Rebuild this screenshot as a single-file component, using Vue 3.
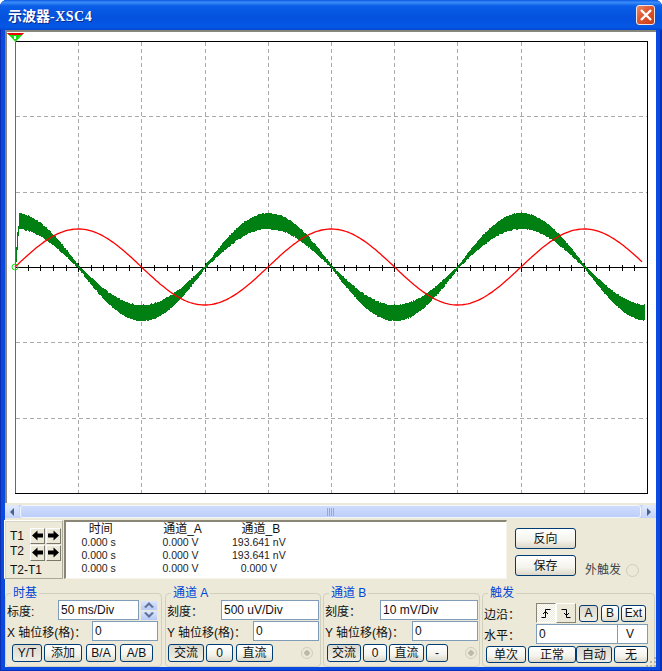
<template>
  <div class="window">
    <!-- 标题栏 -->
    <div class="titlebar">
      <span class="title">示波器<span class="title-latin">-XSC4</span></span>
      <div class="close">
        <svg width="14" height="14" viewBox="0 0 14 14">
          <path d="M2 2 L12 12 M12 2 L2 12" stroke="#fff" stroke-width="2.4" fill="none" />
        </svg>
      </div>
    </div>

    <div class="client">
      <!-- 波形区 -->
      <div class="plot-panel">
        <svg class="plot" width="651" height="473" viewBox="5 30 651 473">
          <rect x="15.5" y="41.5" width="632" height="452" fill="#fff" stroke="#000" />
          <path v-for="x in gridX" :key="'x' + x" :d="`M${x} 42 V493`" class="grid" />
          <path v-for="y in gridY" :key="'y' + y" :d="`M16 ${y} H647`" class="grid" />
          <path d="M15 267.5 H647" stroke="#000" fill="none" shape-rendering="crispEdges" />
          <path :d="ticks" stroke="#000" fill="none" shape-rendering="crispEdges" />
          <path :d="greenPath" stroke="#007f12" stroke-width="1" fill="none" shape-rendering="crispEdges" />
          <path :d="redPath" stroke="#f00" stroke-width="1.3" fill="none" />
          <path d="M15.5 36 V493" stroke="#f0f" fill="none" shape-rendering="crispEdges" />
          <circle cx="15" cy="267" r="3" fill="none" stroke="#18e018" />
          <path d="M7 33 H24 L15.5 42 Z" fill="#10e010" />
          <path d="M7 33 H24 L22 35 H9 Z" fill="#f00000" />
          <path d="M14 36 H16 V39 H14 Z" fill="#fff" />
        </svg>
      </div>

      <!-- 滚动条 -->
      <div class="scrollbar">
        <div class="sb-btn">
          <svg width="8" height="10" viewBox="0 0 8 10"><path d="M6 1 L2 5 L6 9 Z" fill="#4d6185" /></svg>
        </div>
        <div class="sb-thumb">
          <svg width="9" height="8" viewBox="0 0 9 8">
            <path d="M1.5 0 V8 M3.5 0 V8 M5.5 0 V8 M7.5 0 V8" stroke="#8fa9e6" fill="none" />
          </svg>
        </div>
        <div class="sb-btn">
          <svg width="8" height="10" viewBox="0 0 8 10"><path d="M2 1 L6 5 L2 9 Z" fill="#4d6185" /></svg>
        </div>
      </div>

      <!-- 游标读数 -->
      <div class="measure">
        <div class="cursors">
          <span class="t-label">T1</span>
          <div class="arrow">
            <svg width="11" height="11" viewBox="0 0 11 11"><path d="M0 5.5 L5.5 0.5 V3.5 H11 V7.5 H5.5 V10.5 Z" /></svg>
          </div>
          <div class="arrow">
            <svg width="11" height="11" viewBox="0 0 11 11"><path d="M11 5.5 L5.5 0.5 V3.5 H0 V7.5 H5.5 V10.5 Z" /></svg>
          </div>
          <span class="t-label t2">T2</span>
          <div class="arrow">
            <svg width="11" height="11" viewBox="0 0 11 11"><path d="M0 5.5 L5.5 0.5 V3.5 H11 V7.5 H5.5 V10.5 Z" /></svg>
          </div>
          <div class="arrow">
            <svg width="11" height="11" viewBox="0 0 11 11"><path d="M11 5.5 L5.5 0.5 V3.5 H0 V7.5 H5.5 V10.5 Z" /></svg>
          </div>
          <span class="t-diff">T2-T1</span>
        </div>

        <div class="readout">
          <table>
            <thead>
              <tr><th class="c1">时间</th><th class="c2">通道_A</th><th class="c3">通道_B</th></tr>
            </thead>
            <tbody>
              <tr v-for="(row, i) in readings" :key="i">
                <td v-for="(v, j) in row" :key="j">{{ v }}</td>
              </tr>
            </tbody>
          </table>
        </div>

        <div class="side">
          <button class="btn side-btn">反向</button>
          <div class="save-row">
            <button class="btn side-btn">保存</button>
            <span class="ext-label">外触发</span>
            <span class="radio"></span>
          </div>
        </div>
      </div>

      <!-- 控制区 -->
      <div class="groups">
        <fieldset class="group g-time">
          <legend>时基</legend>
          <div class="row">
            <label>标度:</label>
            <input class="field w81" value="50 ms/Div" readonly />
            <div class="spin">
              <div class="spin-btn"><svg width="10" height="6" viewBox="0 0 10 6"><path d="M5 0 L10 5 L8 6 L5 3 L2 6 L0 5 Z" fill="#5f7398" /></svg></div>
              <div class="spin-btn"><svg width="10" height="6" viewBox="0 0 10 6"><path d="M5 6 L10 1 L8 0 L5 3 L2 0 L0 1 Z" fill="#5f7398" /></svg></div>
            </div>
          </div>
          <div class="row">
            <label>X 轴位移(格)：</label>
            <input class="field w66 out1" value="0" readonly />
          </div>
          <div class="buttons" style="margin-left: 5px">
            <button class="btn on" style="width: 30px">Y/T</button>
            <button class="btn" style="width: 38px; margin-left: 2px">添加</button>
            <button class="btn" style="width: 30px; margin-left: 4px">B/A</button>
            <button class="btn" style="width: 33px; margin-left: 4px">A/B</button>
          </div>
        </fieldset>

        <fieldset class="group g-a">
          <legend>通道 A</legend>
          <div class="row">
            <label>刻度：</label>
            <input class="field w98" value="500 uV/Div" readonly />
          </div>
          <div class="row">
            <label>Y 轴位移(格)：</label>
            <input class="field w66" value="0" readonly />
          </div>
          <div class="buttons" style="margin-left: 1px">
            <button class="btn on" style="width: 36px">交流</button>
            <button class="btn" style="width: 27px; margin-left: 2px">0</button>
            <button class="btn" style="width: 37px; margin-left: 3px">直流</button>
            <span class="radio dot" style="margin-left: 28px"></span>
          </div>
        </fieldset>

        <fieldset class="group g-b">
          <legend>通道 B</legend>
          <div class="row">
            <label>刻度：</label>
            <input class="field w98" value="10 mV/Div" readonly />
          </div>
          <div class="row">
            <label>Y 轴位移(格)：</label>
            <input class="field w66" value="0" readonly />
          </div>
          <div class="buttons" style="margin-left: 2px">
            <button class="btn on" style="width: 34px">交流</button>
            <button class="btn" style="width: 24px; margin-left: 2px">0</button>
            <button class="btn" style="width: 35px; margin-left: 2px">直流</button>
            <button class="btn" style="width: 22px; margin-left: 2px">-</button>
            <span class="radio dot" style="margin-left: 17px"></span>
          </div>
        </fieldset>

        <fieldset class="group g-trig">
          <legend>触发</legend>
          <div class="row trig-row1">
            <label class="trig-label">边沿：</label>
            <div class="edge pressed">
              <svg width="12" height="12" viewBox="0 0 12 12"><path d="M1.5 10.5 H5.5 V2.5 H10.5 M3 7 L5.5 4.5 L8 7" stroke="#000" fill="none" /></svg>
            </div>
            <div class="edge">
              <svg width="12" height="12" viewBox="0 0 12 12"><path d="M1.5 2.5 H6.5 V10.5 H10.5 M4 6 L6.5 8.5 L9 6" stroke="#000" fill="none" /></svg>
            </div>
            <button class="btn on small" style="width: 19px; margin-left: 3px">A</button>
            <button class="btn small" style="width: 18px; margin-left: 3px">B</button>
            <button class="btn small" style="width: 25px; margin-left: 2px">Ext</button>
          </div>
          <div class="row trig-row2">
            <label class="trig-label">水平：</label>
            <input class="field w82" value="0" readonly />
            <input class="field unit" value="V" readonly />
          </div>
          <div class="buttons" style="margin-left: 2px; margin-top: 2px">
            <button class="btn small" style="width: 40px">单次</button>
            <button class="btn small" style="width: 48px; margin-left: 2px">正常</button>
            <button class="btn on small" style="width: 36px">自动</button>
            <button class="btn small" style="width: 34px; margin-left: 2px">无</button>
          </div>
        </fieldset>
      </div>

      <!-- 右下角拖动点 -->
      <svg class="grip" width="12" height="12" viewBox="0 0 12 12">
        <path d="M9 1 h2 v2 h-2 Z M5 5 h2 v2 h-2 Z M9 5 h2 v2 h-2 Z M1 9 h2 v2 h-2 Z M5 9 h2 v2 h-2 Z M9 9 h2 v2 h-2 Z" fill="#b8b4a0" />
      </svg>
    </div>
  </div>
</template>

<script setup>
import { computed } from 'vue'

const readings = [
  ['0.000 s', '0.000 V', '193.641 nV'],
  ['0.000 s', '0.000 V', '193.641 nV'],
  ['0.000 s', '0.000 V', '0.000 V']
]

// 网格：10 格 × 6 格
const gridX = Array.from({ length: 9 }, (_, i) => Math.round(15 + 63.2 * (i + 1)) + 0.5)
const gridY = Array.from({ length: 5 }, (_, i) => Math.round(41 + 75.33 * (i + 1)) + 0.5)

const ticks = computed(() => {
  let d = ''
  for (let i = 1; i < 50; i++) {
    const x = Math.round(15 + 12.64 * i) + 0.5
    const h = i % 5 === 0 ? 4 : 2
    d += `M${x} ${265 - (h - 2)} V${271 + (h === 4 ? 1 : 0)} `
  }
  return d
})

const PERIOD = 253

const redPath = computed(() => {
  let d = 'M15 267'
  for (let x = 16; x <= 643; x += 2) {
    const y = 267 - 38 * Math.sin((2 * Math.PI * (x - 15)) / PERIOD)
    d += ` L${x} ${y.toFixed(1)}`
  }
  return d
})

// 伪随机毛刺，保证每次一样
const noise = (x, k) => {
  const s = Math.sin(x * 12.9898 + k * 78.233) * 43758.5453
  return s - Math.floor(s)
}

const greenPath = computed(() => {
  let d = 'M15.5 267 V262 M16.5 262 V247 M17.5 250 V232 M18.5 236 V226'
  for (let x = 19; x <= 644; x++) {
    const c = Math.cos((2 * Math.PI * (x - 15)) / PERIOD)
    const mid = 267 - 46 * c
    const half = 1 + 6.5 * Math.abs(c)
    const top = Math.round(mid - half - noise(x, 1) * 1.1)
    const bottom = Math.round(mid + half + noise(x, 2) * 1.1)
    d += ` M${x + 0.5} ${top} V${bottom}`
  }
  return d
})
</script>

<style scoped>
.window {
  width: 662px;
  height: 671px;
  box-sizing: border-box;
  padding: 0 6px 4px 5px;
  background: #0a4ae0;
  box-shadow: inset 1px 0 #0a2fb0, inset -2px 0 #0630b8, inset 0 -1px #0630b8;
  border-radius: 7px 7px 0 0;
  display: flex;
  flex-direction: column;
  font-family: "Liberation Sans", "Noto Sans CJK SC", sans-serif;
  font-size: 12px;
  color: #111;
  overflow: hidden;
}
.titlebar {
  height: 30px;
  flex: none;
  margin: 0 -6px 0 -5px;
  padding: 0 7px 0 8px;
  display: flex;
  align-items: center;
  justify-content: space-between;
  background: linear-gradient(180deg, #0a5be6 0%, #3b8cf8 8%, #0a5ee8 20%, #0451dd 60%, #0458e6 90%, #0346cf 100%);
}
.title {
  font-family: "Noto Sans CJK SC", sans-serif;
  font-size: 14px;
  font-weight: bold;
  color: #fff;
  text-shadow: 1px 1px 0 #0a2a90;
}
.title-latin {
  font-family: "Liberation Serif", serif;
  letter-spacing: 0.5px;
}
.close {
  width: 19px;
  height: 20px;
  box-sizing: border-box;
  border: 1px solid #f3e4de;
  border-radius: 3px;
  background: linear-gradient(135deg, #ea8a68 0%, #e0562f 45%, #c83c14 100%);
  display: flex;
  align-items: center;
  justify-content: center;
}
.client {
  flex: 1;
  background: #ece9d8;
  position: relative;
  display: flex;
  flex-direction: column;
  min-height: 0;
}
.plot-panel {
  height: 473px;
  flex: none;
  background: #fff;
  box-shadow: inset 2px 2px 0 #86867a;
}
.plot {
  display: block;
}
.grid {
  stroke: #aaa;
  stroke-dasharray: 4 3;
  fill: none;
  shape-rendering: crispEdges;
}
.scrollbar {
  height: 13px;
  margin-top: 2px;
  display: flex;
  gap: 1px;
  background: #c4d5fc;
}
.sb-btn {
  width: 14px;
  flex: none;
  background: linear-gradient(180deg, #e2eafe, #c3d3fb);
  border-radius: 2px;
  display: flex;
  align-items: center;
  justify-content: center;
}
.sb-thumb {
  flex: 1;
  border: 1px solid #f2f6ff;
  border-radius: 3px;
  background: linear-gradient(180deg, #cfdcfd, #bccefa);
  display: flex;
  align-items: center;
  justify-content: center;
}
.measure {
  height: 59px;
  margin-top: 2px;
  flex: none;
  display: flex;
}
.cursors {
  width: 59px;
  margin-left: -1px;
  box-sizing: border-box;
  border: 1px solid;
  border-color: #fff #aca899 #aca899 #fff;
  box-shadow: inset 1px 1px 0 #d8d5c4;
  padding: 6px 1px 0 5px;
  display: grid;
  grid-template-columns: 20px 16px 16px;
  grid-template-rows: 17px 17px 1fr;
  align-items: center;
}
.t-label {
  font-size: 12px;
}
.t2 {
  margin-top: -3px;
}
.t-diff {
  grid-column: 1 / 4;
  font-size: 12px;
}
.arrow {
  width: 15px;
  height: 16px;
  box-sizing: border-box;
  background: #ece9d8;
  border: 1px solid;
  border-color: #fff #7a7868 #7a7868 #fff;
  display: flex;
  align-items: center;
  justify-content: center;
}
.arrow svg {
  fill: #000;
}
.readout {
  width: 443px;
  margin-left: 1px;
  box-sizing: border-box;
  border: 1px solid;
  border-color: #8a8676 #f6f4ea #f6f4ea #8a8676;
  border-top-width: 2px;
  border-left-width: 2px;
  background: #fff;
  flex: none;
}
.readout table {
  border-collapse: collapse;
  table-layout: fixed;
  width: 226px;
}
.readout th {
  font-weight: normal;
  font-size: 12px;
  line-height: 14px;
  padding: 0;
}
.readout td {
  font-size: 10.5px;
  line-height: 13px;
  text-align: center;
  padding: 0 4px 0 0;
  color: #222;
}
.c1 { width: 69px; }
.c2 { width: 94px; }
.c3 { width: 62px; }
.side {
  margin-left: 8px;
  padding-top: 8px;
}
.save-row {
  display: flex;
  align-items: flex-start;
  margin-top: 6px;
}
.side-btn {
  width: 61px;
  height: 21px;
  flex: none;
}
.ext-label {
  margin-left: 9px;
  margin-top: 6px;
  color: #444;
  line-height: 18px;
  white-space: nowrap;
}
.save-row .radio {
  width: 13px;
  height: 13px;
  margin: 9px 0 0 5px;
}
.radio {
  width: 12px;
  height: 12px;
  box-sizing: border-box;
  border: 1px solid #d0cdbc;
  border-radius: 50%;
  flex: none;
  display: inline-block;
}
.dot {
  background: radial-gradient(circle, #bdbaaa 0 2.5px, transparent 3px);
}
.groups {
  display: flex;
  margin-top: 8px;
  height: 80px;
}
.group {
  margin: 0;
  min-width: 0;
  height: 80px;
  box-sizing: border-box;
  border: 1px solid #d0d0bf;
  border-radius: 4px;
  padding: 1px 1px 0;
}
.group legend {
  color: #0046d5;
  font-size: 12px;
  line-height: 12px;
  padding: 0 2px;
  margin-left: 4px;
}
.g-time { width: 157px; padding-right: 4px; }
.g-a { width: 156px; margin-left: 3px; }
.g-b { width: 157px; margin-left: 2px; }
.g-trig { width: 173px; margin-left: 2px; }
.row {
  display: flex;
  align-items: center;
  height: 20px;
  margin-bottom: 1px;
}
.row label {
  flex: 1;
  white-space: nowrap;
  font-size: 12px;
}
.field {
  box-sizing: border-box;
  height: 20px;
  border: 1px solid #7f9db9;
  background: #fff;
  padding: 0 2px;
  font: inherit;
  font-size: 12px;
  color: #111;
  outline: none;
  flex: none;
  border-radius: 0;
}
.w81 { width: 81px; }
.w66 { width: 66px; }
.w98 { width: 98px; }
.w82 { width: 82px; }
.out1 { margin-right: -1px; }
.unit {
  width: 30px;
  border-left: 0;
  padding-left: 8px;
}
.spin {
  width: 16px;
  margin-left: 2px;
  height: 19px;
  display: flex;
  flex-direction: column;
  gap: 1px;
  flex: none;
}
.spin-btn {
  flex: 1;
  background: linear-gradient(180deg, #dce6fd, #b6c9f8);
  display: flex;
  align-items: center;
  justify-content: center;
}
.buttons {
  display: flex;
  align-items: center;
  margin-top: 3px;
}
.btn {
  height: 18px;
  box-sizing: border-box;
  border: 1px solid #003c74;
  border-radius: 3px;
  background: linear-gradient(180deg, #fff 0%, #f4f3ec 60%, #dcd8c8 100%);
  font: inherit;
  font-size: 12px;
  color: #111;
  padding: 0;
  line-height: 14px;
  flex: none;
}
.btn.on {
  background: linear-gradient(180deg, #dcdad0, #efeee6);
}
.side .btn {
  height: 21px;
}
.trig-row1 {
  margin-top: 3px;
}
.trig-label {
  flex: none !important;
  width: 52px;
}
.edge {
  width: 20px;
  height: 20px;
  box-sizing: border-box;
  border: 1px solid;
  border-color: #fff #8a8676 #8a8676 #fff;
  display: flex;
  align-items: center;
  justify-content: center;
  flex: none;
}
.edge.pressed {
  border-color: #8a8676 #fff #fff #8a8676;
  background: repeating-conic-gradient(#fff 0 25%, #ece9d8 0 50%) 0 0 / 2px 2px;
}
.btn.small {
  height: 17px;
}
.trig-row2 {
  margin-bottom: 0;
}
.grip {
  position: absolute;
  right: -1px;
  bottom: -1px;
}
</style>

<style>
html, body {
  margin: 0;
  background: #fff;
}
</style>
